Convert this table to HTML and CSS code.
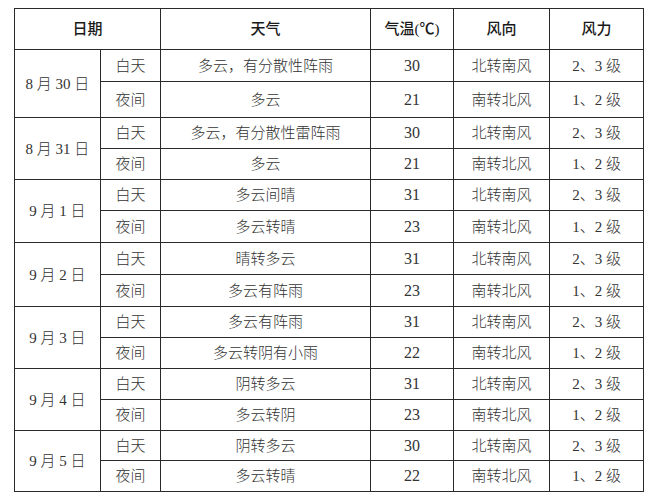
FILE: index.html
```html
<!DOCTYPE html>
<html lang="zh">
<head>
<meta charset="utf-8">
<link rel="stylesheet" href="styles.css">
</head>
<body>
<table class="wx">
  <colgroup>
    <col class="c-date"><col class="c-per"><col class="c-wx"><col class="c-temp"><col class="c-dir"><col class="c-force">
  </colgroup>
  <thead>
    <tr class="h41"><th colspan="2">日期</th><th>天气</th><th>气温(℃)</th><th>风向</th><th>风力</th></tr>
  </thead>
  <tbody>
    <tr class="h32"><td rowspan="2">8 月 30 日</td><td>白天</td><td>多云，有分散性阵雨</td><td class="num">30</td><td>北转南风</td><td>2、3 级</td></tr>
    <tr class="h36"><td>夜间</td><td>多云</td><td class="num">21</td><td>南转北风</td><td>1、2 级</td></tr>
    <tr class="h31"><td rowspan="2">8 月 31 日</td><td>白天</td><td>多云，有分散性雷阵雨</td><td class="num">30</td><td>北转南风</td><td>2、3 级</td></tr>
    <tr class="h31"><td>夜间</td><td>多云</td><td class="num">21</td><td>南转北风</td><td>1、2 级</td></tr>
    <tr class="h31"><td rowspan="2">9 月 1 日</td><td>白天</td><td>多云间晴</td><td class="num">31</td><td>北转南风</td><td>2、3 级</td></tr>
    <tr class="h32"><td>夜间</td><td>多云转晴</td><td class="num">23</td><td>南转北风</td><td>1、2 级</td></tr>
    <tr class="h32"><td rowspan="2">9 月 2 日</td><td>白天</td><td>晴转多云</td><td class="num">31</td><td>北转南风</td><td>2、3 级</td></tr>
    <tr class="h32"><td>夜间</td><td>多云有阵雨</td><td class="num">23</td><td>南转北风</td><td>1、2 级</td></tr>
    <tr class="h31"><td rowspan="2">9 月 3 日</td><td>白天</td><td>多云有阵雨</td><td class="num">31</td><td>北转南风</td><td>2、3 级</td></tr>
    <tr class="h31"><td>夜间</td><td>多云转阴有小雨</td><td class="num">22</td><td>南转北风</td><td>1、2 级</td></tr>
    <tr class="h31"><td rowspan="2">9 月 4 日</td><td>白天</td><td>阴转多云</td><td class="num">31</td><td>北转南风</td><td>2、3 级</td></tr>
    <tr class="h31"><td>夜间</td><td>多云转阴</td><td class="num">23</td><td>南转北风</td><td>1、2 级</td></tr>
    <tr class="h30"><td rowspan="2">9 月 5 日</td><td>白天</td><td>阴转多云</td><td class="num">30</td><td>北转南风</td><td>2、3 级</td></tr>
    <tr class="h31"><td>夜间</td><td>多云转晴</td><td class="num">22</td><td>南转北风</td><td>1、2 级</td></tr>
  </tbody>
</table>
</body>
</html>
```
FILE: styles.css
```css
html, body {
  margin: 0;
  padding: 0;
  background: #fff;
}
body {
  padding: 8px 0 0 14px;
  font-family: "Liberation Serif", "Noto Sans CJK SC", serif;
  font-size: 15px;
  color: #333;
}
.wx {
  border-collapse: collapse;
  table-layout: fixed;
  width: 629px;
}
.c-date { width: 86px; }
.c-per { width: 60px; }
.c-wx { width: 210px; }
.c-temp { width: 83px; }
.c-dir { width: 96px; }
.c-force { width: 94px; }
.wx th, .wx td {
  border: 1px solid #2a2a2a;
  padding: 0;
  text-align: center;
  vertical-align: middle;
  line-height: 18px;
  white-space: nowrap;
}
.wx td {
  font-weight: 300;
}
.wx th {
  font-weight: 500;
  color: #1a1a1a;
  font-size: 15px;
}
.h41 { height: 41px; }
.h36 { height: 36px; }
.h32 { height: 32px; }
.h31 { height: 31px; }
.h30 { height: 30px; }
.num { font-size: 16px; font-weight: 400; }
```
